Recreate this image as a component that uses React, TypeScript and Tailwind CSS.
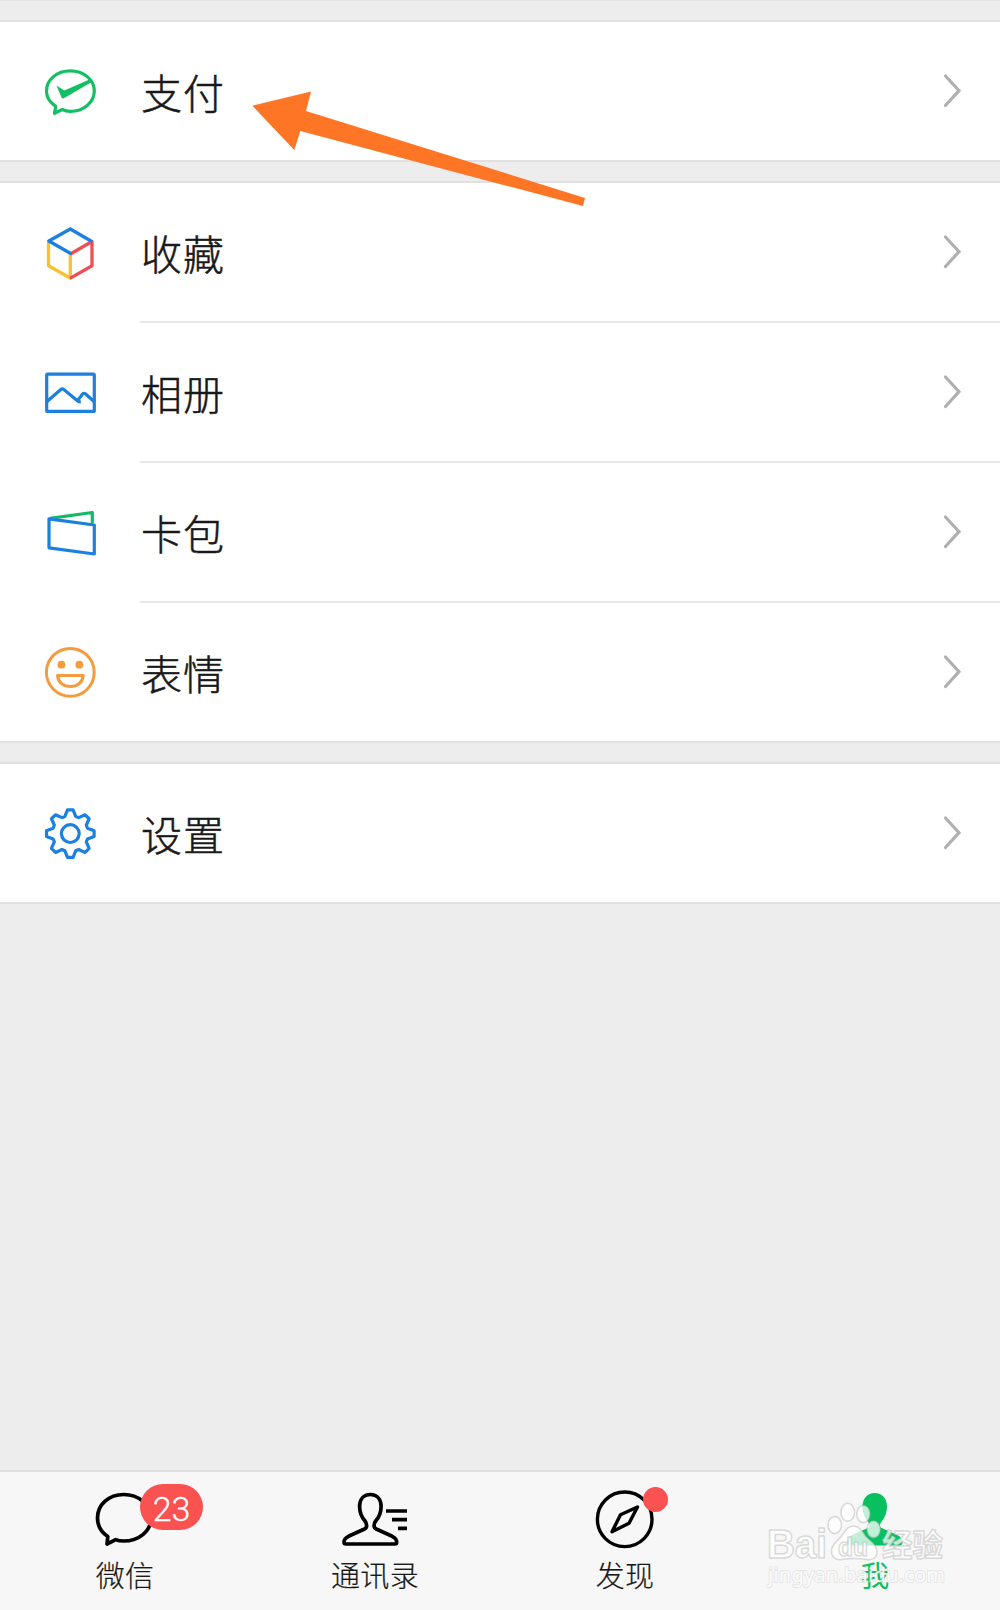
import type { ReactNode } from "react";

const PayIcon = () => (
  <svg width="60" height="60" viewBox="0 0 60 60" fill="none">
    <path
      d="M15.8 45.3C9.8 41.5 6.5 36 6.5 30 6.5 18.6 17 9.8 30.3 9.8S54.3 18.6 54.3 30 43.6 50.3 30.3 50.3C27.5 50.3 25 49.8 22.3 48.5L14.5 52.3Z"
      stroke="#13bf63"
      strokeWidth="3.2"
      strokeLinejoin="round"
    />
    <path d="M16.5 24.5L24.3 29.5 50 18.3 52.3 20.7 23.8 37.3Q22.3 38 21.5 36.5Z" fill="#13bf63" />
  </svg>
);

const FavoritesIcon = () => (
  <svg width="60" height="60" viewBox="0 0 60 60" fill="none" strokeWidth="3.3" strokeLinejoin="round" strokeLinecap="round">
    <path d="M8.5 20V43.8L30.3 56V32" stroke="#fbc02f" />
    <path d="M31.3 31.5L52 19.5V43.8L31.3 55.6" stroke="#ee4f55" />
    <path d="M51 19L30.3 7 8.8 19 30.3 31.3" stroke="#1b80e0" />
  </svg>
);

const AlbumIcon = () => (
  <svg width="60" height="60" viewBox="0 0 60 60" fill="none" stroke="#1b80e0" strokeWidth="3.2" strokeLinejoin="round">
    <rect x="6.7" y="12.2" width="47.6" height="37.2" rx="1" />
    <path d="M7 39.5L20.8 27.5Q22.3 26.3 23.8 27.5L38 39.2Q38.8 39.8 40.8 39.8M37.6 38.6L42.4 32.2Q44 30.7 45.6 32L54 39.5" />
  </svg>
);

const CardsIcon = () => (
  <svg width="60" height="60" viewBox="0 0 60 60" fill="none" strokeWidth="3.2" strokeLinejoin="round">
    <path d="M10 16.3L52.3 10.5V21.5" stroke="#16b86a" />
    <path d="M9 16.8L54.3 23V52L9 45.8Z" stroke="#1b80e0" />
  </svg>
);

const StickerIcon = () => (
  <svg width="60" height="60" viewBox="0 0 60 60" fill="none" stroke="#f39b3f" strokeWidth="3" strokeLinejoin="round">
    <circle cx="30.3" cy="30.3" r="23.9" />
    <circle cx="21.4" cy="22.7" r="3.9" fill="#f39b3f" stroke="none" />
    <circle cx="39.3" cy="22.7" r="3.9" fill="#f39b3f" stroke="none" />
    <path d="M17.5 33.5H43.3C42.7 40.5 37.3 44.6 30.4 44.6S18.1 40.5 17.5 33.5Z" />
  </svg>
);

// one tooth, repeated every 45 degrees
const tooth = [[-5.4, -17.2], [-2.8, -23.8], [2.8, -23.8], [5.4, -17.2]];
const gearPoints = Array.from({ length: 8 }, (_, i) => {
  const a = (i * Math.PI) / 4;
  return tooth
    .map(([x, y]) => `${(30.3 + x * Math.cos(a) - y * Math.sin(a)).toFixed(2)},${(30.6 + x * Math.sin(a) + y * Math.cos(a)).toFixed(2)}`)
    .join(" ");
}).join(" ");

const SettingsIcon = () => (
  <svg width="60" height="60" viewBox="0 0 60 60" fill="none" stroke="#1b80e0" strokeWidth="3.2" strokeLinejoin="round">
    <polygon points={gearPoints} />
    <circle cx="30.3" cy="30.6" r="8.9" />
  </svg>
);

const Row = ({ icon, label, divider }: { icon: ReactNode; label: string; divider?: boolean }) => (
  <div className="bg-white">
    <div className="flex h-[138px] items-center pl-10 pr-9">
      {icon}
      <span className="ml-[41px] text-[41px] leading-none tracking-[1px] text-[#191919] [-webkit-text-stroke:0.5px_#191919]">{label}</span>
      <svg className="ml-auto" width="24" height="40" viewBox="0 0 24 40" fill="none">
        <path d="M5.5 5L19 19.7 5.5 34.5" stroke="#b0b0b0" strokeWidth="3.2" strokeLinecap="round" />
      </svg>
    </div>
    {divider && <div className="ml-[140px] h-0.5 bg-[#e8e8e8]" />}
  </div>
);

const Gap = () => <div className="h-[23px] border-y-2 border-[#e1e1e1] bg-[#ededed]" />;

const personPath =
  "M45.3 8.5C38.5 8.5 34.6 13.5 34.6 20.5 34.6 27 36.5 31 40 35 42 37.5 42.5 41.5 39.5 43L23.5 50.3C20 52 19 53.5 19 56 19 57.5 19.5 58 21 58H69.7C71.2 58 71.7 57.5 71.7 56 71.7 53.5 70.7 52 67.2 50.3L51.2 43C48.2 41.5 48.7 37.5 50.7 35 54.2 31 56.1 27 56.1 20.5 56.1 13.5 52.2 8.5 45.3 8.5Z";

const Tab = ({ label, active, children }: { label: string; active?: boolean; children: ReactNode }) => (
  <div className="flex flex-1 flex-col items-center pt-3.5">
    <div className="relative h-[66px] w-[100px]">{children}</div>
    <span
      className={`mt-2 text-[29px] leading-none tracking-[0.3px] ${active ? "font-normal text-[#07c160]" : "text-[#191919] [-webkit-text-stroke:0.2px_#191919]"}`}
    >
      {label}
    </span>
  </div>
);

const Watermark = () => (
  <svg
    className="absolute bottom-0 right-0"
    width="250"
    height="150"
    viewBox="0 0 250 150"
    fill="#fff"
    fillOpacity="0.75"
    stroke="#b8b8b8"
    strokeOpacity="0.5"
    strokeWidth="1.5"
    strokeLinejoin="round"
  >
    <ellipse cx="84.7" cy="65" rx="6.8" ry="8.6" />
    <ellipse cx="97.7" cy="52.3" rx="6.8" ry="9" />
    <ellipse cx="113.3" cy="54" rx="6.6" ry="8.6" />
    <ellipse cx="123.6" cy="69.3" rx="6.6" ry="8.3" />
    <path d="M103.5 66C109 66 112 71 115 75.5 119 81 127 84 127 92 127 98 122 100.5 116 99.5 107 98 101 98 92 99.5 86 100.5 81.5 97.5 81.5 91 81.5 84 87 82 91.5 76 95 71 97.5 66 103.5 66Z" />
    <g fontFamily="Liberation Sans, sans-serif" fontWeight="700">
      <text x="17" y="98" fontSize="40" textLength="60" lengthAdjust="spacingAndGlyphs">Bai</text>
      <text x="88" y="95.5" fontSize="25" textLength="30" lengthAdjust="spacingAndGlyphs">du</text>
    </g>
    <text x="132" y="96" fontSize="30.5" fontWeight="700" fontFamily="Noto Sans CJK SC, sans-serif">经验</text>
    <text
      x="18"
      y="122"
      fontSize="20"
      fontWeight="400"
      textLength="177"
      fontFamily="Noto Sans, sans-serif"
      fillOpacity="0.9"
      strokeOpacity="0.3"
      strokeWidth="2"
      paintOrder="stroke"
    >
      jingyan.baidu.com
    </text>
  </svg>
);

export default function App() {
  return (
    <div className="relative flex h-[1610px] w-[1000px] flex-col overflow-hidden bg-[#ededed] font-['Noto_Sans_CJK_SC',sans-serif] font-light">
      <div className="h-[22px] border-b-2 border-t border-[#e1e1e1]" />
      <Row icon={<PayIcon />} label="支付" />
      <Gap />
      <Row icon={<FavoritesIcon />} label="收藏" divider />
      <Row icon={<AlbumIcon />} label="相册" divider />
      <Row icon={<CardsIcon />} label="卡包" divider />
      <Row icon={<StickerIcon />} label="表情" />
      <Gap />
      <Row icon={<SettingsIcon />} label="设置" />
      <div className="h-0.5 bg-[#e1e1e1]" />

      <div className="mt-auto flex h-[140px] border-t-2 border-[#e0e0e0] bg-[#f7f7f7]">
        <Tab label="微信">
          <svg width="100" height="66" viewBox="0 0 100 66" fill="none" stroke="#000" strokeWidth="3.7" strokeLinejoin="round">
            <path d="M32.8 50.5C26 46 22.5 39.5 22.5 32 22.5 18.5 34 8.5 48.7 8.5S76 18.5 76 32 63.5 55 48.7 55C46 55 43.3 54.6 40.7 53.7L32 58Z" />
          </svg>
          <span className="absolute -top-0.5 left-[65px] flex h-[46px] w-[63px] items-center justify-center rounded-full bg-[#fa5151] pt-1 font-[Roboto,sans-serif] text-[34px] font-light leading-none text-white [-webkit-text-stroke:0.3px_white]">
            23
          </span>
        </Tab>
        <Tab label="通讯录">
          <svg width="100" height="66" viewBox="0 0 100 66" fill="none" stroke="#000" strokeWidth="3.7">
            <path d={personPath} strokeLinejoin="round" />
            <path d="M61 25H82M67 33.7H82M73 42.3H82" />
          </svg>
        </Tab>
        <Tab label="发现">
          <svg width="100" height="66" viewBox="0 0 100 66" fill="none" stroke="#000" strokeWidth="3.4" strokeLinejoin="round">
            <circle cx="49.7" cy="33.3" r="27.3" />
            <path d="M62.5 21L54 37.3 37 45.8 45.5 28.8Z" />
          </svg>
          <span className="absolute left-[68px] top-px size-[25px] rounded-full bg-[#fa5151]" />
        </Tab>
        <Tab label="我" active>
          <svg width="100" height="66" viewBox="0 0 100 66" fill="#07c160" stroke="#07c160" strokeWidth="3">
            <path d={personPath} transform="translate(4.4 0)" />
          </svg>
        </Tab>
      </div>

      <svg className="absolute left-[240px] top-[70px]" width="360" height="150" viewBox="0 0 360 150">
        <polygon points="12.3,35.7 71,21.5 66,41 345,128 343,136 60.3,61 54.3,80" fill="#ff7526" />
      </svg>
      <Watermark />
    </div>
  );
}
